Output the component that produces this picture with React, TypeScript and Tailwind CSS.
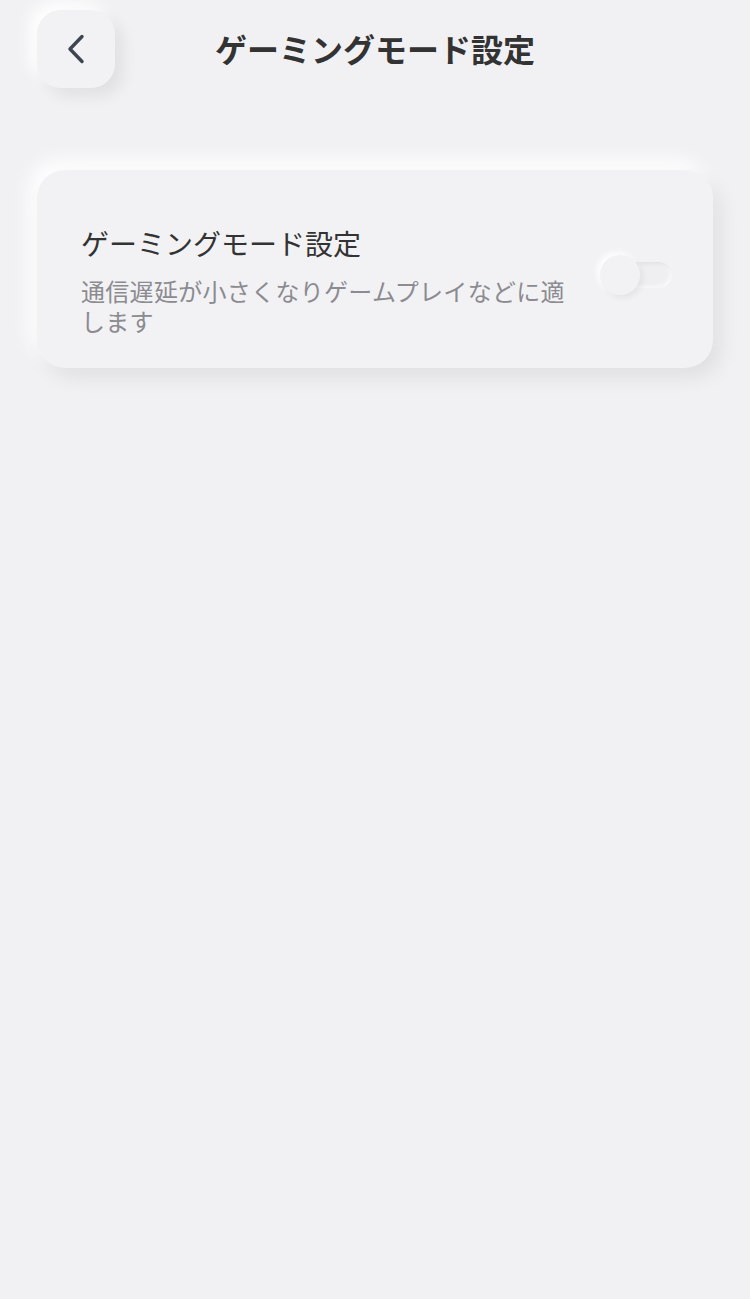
import React from "react";

export default function App() {
  return (
    <div
      className="min-h-[1299px] w-full bg-[#f1f1f4] relative overflow-hidden"
      style={{ fontFamily: '"Noto Sans CJK JP", "Noto Sans", sans-serif' }}
    >
      <header className="relative flex items-center h-[98px] px-[37px]">
        <button className="w-[78px] h-[78px] rounded-[24px] bg-[#f2f2f5] flex items-center justify-center shadow-[8px_8px_16px_rgba(0,0,0,0.07),-8px_-8px_16px_rgba(255,255,255,0.95)]">
          <svg width="20" height="32" viewBox="0 0 20 32" fill="none" stroke="#3d4550" strokeWidth="3.4" strokeLinecap="round" strokeLinejoin="round">
            <path d="M16 3.5L4 16l12 12.5" />
          </svg>
        </button>
        <h1 className="absolute left-0 right-0 top-[30px] text-center text-[32px] font-bold text-[#333333] pointer-events-none leading-[36px]">
          ゲーミングモード設定
        </h1>
      </header>
      <div className="px-[37px] pt-[72px]">
        <div className="rounded-[28px] bg-[#f2f2f5] shadow-[8px_10px_20px_rgba(0,0,0,0.07),-8px_-10px_20px_rgba(255,255,255,0.95)] pl-[44px] pr-[41px] pt-[55px] pb-[32px] flex items-start">
          <div className="w-[495px] flex flex-col">
            <div className="text-[28px] leading-[36px] text-[#333333]">ゲーミングモード設定</div>
            <div className="mt-[15px] text-[24px] tracking-[0.3px] leading-[30px] text-[#8b8b90]">
              通信遅延が小さくなりゲームプレイなどに適します
            </div>
          </div>
          <div className="ml-auto mt-[29px] relative w-[72px] h-[42px] flex items-center">
            <div className="absolute right-0 w-[54px] h-[26px] rounded-full bg-[#efeff2] shadow-[inset_2px_2px_4px_rgba(0,0,0,0.06),inset_-2px_-2px_4px_rgba(255,255,255,0.7)]" />
            <div className="absolute left-0 w-[40px] h-[40px] rounded-full bg-[#f2f2f5] shadow-[3px_3px_6px_rgba(0,0,0,0.06),-3px_-3px_6px_rgba(255,255,255,0.95)]" />
          </div>
        </div>
      </div>
    </div>
  );
}
